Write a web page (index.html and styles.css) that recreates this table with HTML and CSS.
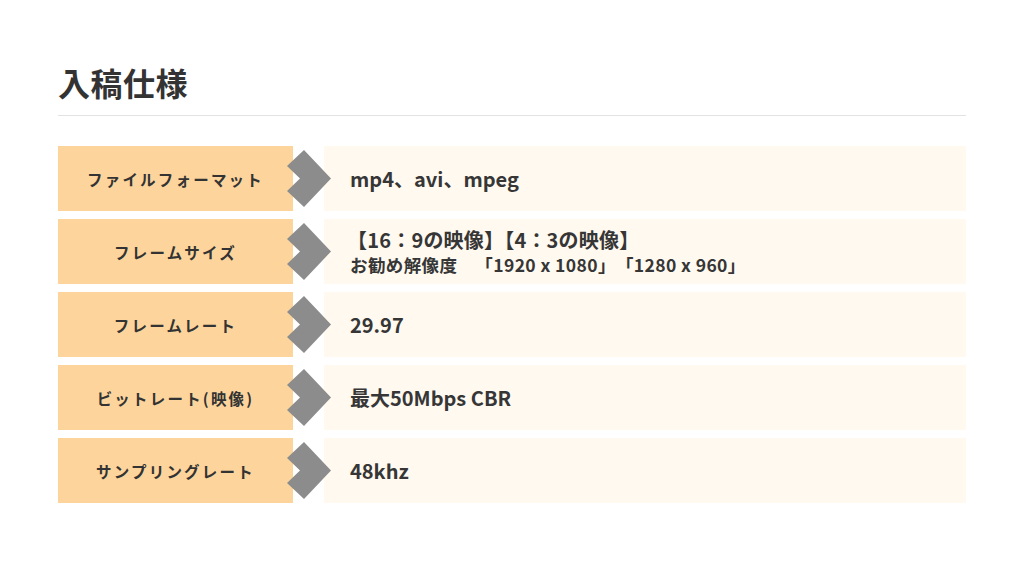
FILE: index.html
```html
<!DOCTYPE html>
<html lang="ja">
<head>
<meta charset="utf-8">
<link rel="stylesheet" href="styles.css">
</head>
<body>
<main class="page">
  <h1 class="title">入稿仕様</h1>
  <hr class="divider">
  <div class="spec">
    <div class="row">
      <div class="label">ファイルフォーマット</div>
      <svg class="chev" viewBox="0 0 44 57"><polygon points="17,0 44,28.5 17,57 0,41 13,28.5 0,16"/></svg>
      <div class="value">mp4、avi、mpeg</div>
    </div>
    <div class="row">
      <div class="label">フレームサイズ</div>
      <svg class="chev" viewBox="0 0 44 57"><polygon points="17,0 44,28.5 17,57 0,41 13,28.5 0,16"/></svg>
      <div class="value">
        <div class="line1">【16：9の映像】【4：3の映像】</div>
        <div class="line2">お勧め解像度　「1920 x 1080」「1280 x 960」</div>
      </div>
    </div>
    <div class="row">
      <div class="label">フレームレート</div>
      <svg class="chev" viewBox="0 0 44 57"><polygon points="17,0 44,28.5 17,57 0,41 13,28.5 0,16"/></svg>
      <div class="value">29.97</div>
    </div>
    <div class="row">
      <div class="label">ビットレート(映像)</div>
      <svg class="chev" viewBox="0 0 44 57"><polygon points="17,0 44,28.5 17,57 0,41 13,28.5 0,16"/></svg>
      <div class="value">最大50Mbps CBR</div>
    </div>
    <div class="row">
      <div class="label">サンプリングレート</div>
      <svg class="chev" viewBox="0 0 44 57"><polygon points="17,0 44,28.5 17,57 0,41 13,28.5 0,16"/></svg>
      <div class="value">48khz</div>
    </div>
  </div>
</main>
</body>
</html>
```
FILE: styles.css
```css
* { box-sizing: border-box; }
html, body { margin: 0; padding: 0; background: #ffffff; }
body {
  font-family: "Noto Sans CJK JP", sans-serif;
  color: #363636;
  width: 1024px;
  height: 577px;
  overflow: hidden;
}
.page {
  padding: 62px 58px 0 58px;
  width: 1024px;
}
.title {
  margin: 0;
  font-size: 32px;
  font-weight: 700;
  line-height: 40px;
  color: #333333;
  letter-spacing: 0.5px;
}
.divider {
  margin: 13px 0 0 0;
  border: 0;
  height: 1px;
  background: #e2e2e2;
  width: 908px;
}
.spec {
  margin-top: 30px;
  display: flex;
  flex-direction: column;
  gap: 8px;
  width: 908px;
}
.row {
  position: relative;
  display: grid;
  grid-template-columns: 235px 1fr;
  column-gap: 31px;
  height: 65px;
}
.label {
  background: #fdd59c;
  display: flex;
  align-items: center;
  justify-content: center;
  font-size: 15.5px;
  font-weight: 700;
  letter-spacing: 2.2px;
  color: #333333;
}
.value {
  background: #fff9f0;
  display: flex;
  flex-direction: column;
  justify-content: center;
  padding-left: 26px;
  font-size: 20px;
  font-weight: 700;
  color: #363636;
}
.line1 {
  font-size: 20px;
  line-height: 26px;
  margin-left: -3px;
  letter-spacing: 0.2px;
}
.line2 {
  font-size: 17.5px;
  line-height: 23px;
  letter-spacing: 0.4px;
  text-spacing-trim: space-all;
}
.chev {
  position: absolute;
  left: 229px;
  top: 4px;
  width: 44px;
  height: 57px;
  fill: #8c8c8c;
}
```
